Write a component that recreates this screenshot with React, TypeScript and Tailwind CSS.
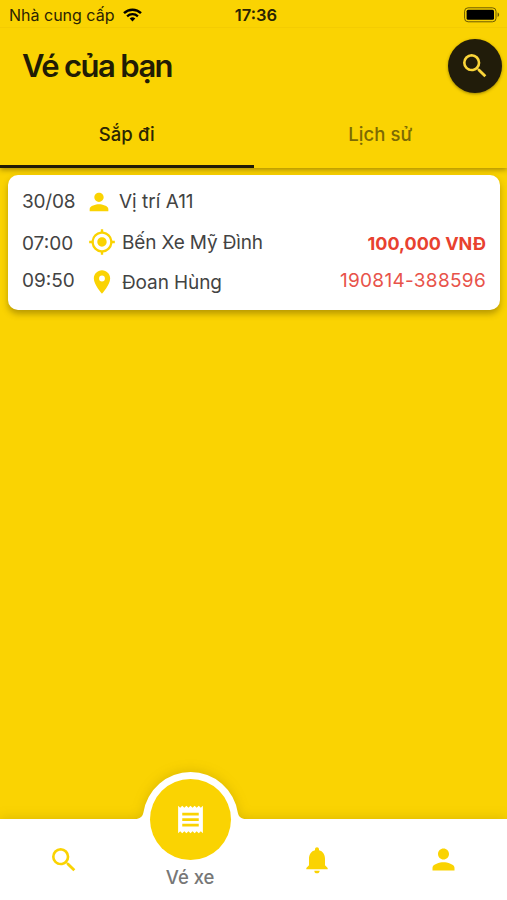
import React, { useState } from 'react';
import {
  MdLocationOn,
  MdMyLocation,
  MdNotifications,
  MdPerson,
  MdReceipt,
  MdSearch,
} from 'react-icons/md';

interface Ticket {
  date: string;
  seat: string;
  departTime: string;
  from: string;
  arriveTime: string;
  to: string;
  price: string;
  code: string;
}

const tickets: Ticket[] = [
  {
    date: '30/08',
    seat: 'Vị trí A11',
    departTime: '07:00',
    from: 'Bến Xe Mỹ Đình',
    arriveTime: '09:50',
    to: 'Đoan Hùng',
    price: '100,000 VNĐ',
    code: '190814-388596',
  },
];

function StatusBar() {
  return (
    <div className="grid grid-cols-3 items-center h-7 pl-[9px] pr-[7px] pt-[2px] border-b border-[#f4cc02] text-[#2b2403]">
      <div className="flex items-center gap-[9px]">
        <span className="text-[16px] leading-none whitespace-nowrap">Nhà cung cấp</span>
        <svg width="19" height="14" viewBox="0 0 19 14" fill="none" className="shrink-0 text-black">
          <path d="M1 5.2a12.2 12.2 0 0 1 17 0" stroke="currentColor" strokeWidth="2.4" />
          <path d="M4.1 8.3a7.8 7.8 0 0 1 10.8 0" stroke="currentColor" strokeWidth="2.3" />
          <path d="M9.5 13.4 6.7 10.6a4 4 0 0 1 5.6 0z" fill="currentColor" />
        </svg>
      </div>
      <span className="pl-[3px] pt-px text-center text-[16.5px] leading-none font-semibold">17:36</span>
      <div className="flex justify-end">
        <svg width="36" height="16" viewBox="0 0 36 16" fill="none">
          <rect x="0.6" y="0.8" width="31.4" height="14" rx="3.5" stroke="#6b5a02" strokeWidth="1" />
          <rect x="2.6" y="2.8" width="27.4" height="10" rx="1.5" fill="#000" />
          <path d="M33.6 5.6c2 .7 2 3.7 0 4.4z" fill="#6b5a02" />
        </svg>
      </div>
    </div>
  );
}

interface TabsProps {
  active: string;
  onChange: (tab: string) => void;
}

function Tabs({ active, onChange }: TabsProps) {
  const tabs = [
    { id: 'upcoming', label: 'Sắp đi' },
    { id: 'history', label: 'Lịch sử' },
  ];

  return (
    <div className="grid grid-cols-2 h-16">
      {tabs.map((tab) => (
        <button
          key={tab.id}
          onClick={() => onChange(tab.id)}
          className={`border-b-[3px] text-[18.5px] font-medium tracking-[0.1px] ${
            active === tab.id ? 'border-[#1f1b05] text-[#2b2503]' : 'border-transparent text-[#7d6a03]'
          }`}
        >
          {tab.label}
        </button>
      ))}
    </div>
  );
}

function TicketCard({ ticket }: { ticket: Ticket }) {
  return (
    <div className="h-[135px] rounded-[10px] bg-white px-[14px] pt-[7px] text-[19px] text-[#434343] shadow-[0_4px_6px_rgba(80,60,0,0.38)]">
      <div className="flex items-center h-10">
        <span className="w-[63px] tracking-[-0.2px]">{ticket.date}</span>
        <MdPerson className="size-[28px] text-[#fad302]" />
        <span className="ml-[6px]">{ticket.seat}</span>
      </div>
      <div className="flex items-center h-10">
        <span className="w-[66px] pt-[4px]">{ticket.departTime}</span>
        <MdMyLocation className="size-[28px] text-[#fad302]" />
        <span className="ml-[6px] pt-[2px] tracking-[-0.15px]">{ticket.from}</span>
        <span className="ml-auto pt-[2px] text-[18px] font-bold text-[#e8412f]">{ticket.price}</span>
      </div>
      <div className="flex items-center h-10">
        <span className="w-[66px] pb-[2px]">{ticket.arriveTime}</span>
        <MdLocationOn className="size-[28px] text-[#fad302]" />
        <span className="ml-[6px] pt-[2px] tracking-[-0.1px]">{ticket.to}</span>
        <span className="ml-auto pb-[2px] tracking-[0.3px] text-[#e8534a]">{ticket.code}</span>
      </div>
    </div>
  );
}

function BottomNav() {
  return (
    <nav className="relative h-[81px] text-[#fad302]">
      {/* White bar with the raised bump */}
      <svg
        className="absolute left-0 -top-[49px] overflow-visible drop-shadow-[0_-1px_6px_rgba(90,70,0,0.18)]"
        width="507"
        height="130"
        viewBox="0 0 507 130"
      >
        <path
          d="M0 49H135C140 49 142.5 46.5 143.3 43A47.8 47.8 0 0 1 237.9 43C238.7 46.5 241 49 246 49H507V130H0Z"
          fill="#fff"
        />
      </svg>
      <div className="relative grid grid-cols-4 h-full">
        <button className="flex justify-center items-center pl-[2px]">
          <MdSearch className="size-8" />
        </button>
        <button className="flex flex-col items-center">
          <span className="-mt-[40px] flex size-[81px] shrink-0 items-center justify-center rounded-full bg-[#fad302] text-white">
            <MdReceipt className="size-[33px]" />
          </span>
          <span className="mt-[5px] text-[18.5px] leading-[24px] font-medium text-[#777]">Vé xe</span>
        </button>
        <button className="flex justify-center items-center">
          <MdNotifications className="size-8" />
        </button>
        <button className="flex justify-center items-center">
          <MdPerson className="size-[33px]" />
        </button>
      </div>
    </nav>
  );
}

export default function App() {
  const [activeTab, setActiveTab] = useState('upcoming');

  return (
    <div className="flex flex-col w-[507px] h-[900px] overflow-hidden bg-[#fad302] font-['Inter','Noto_Sans',sans-serif]">
      <header className="relative bg-[#fad302] shadow-[0_2px_5px_rgba(80,60,0,0.45)]">
        <StatusBar />
        <div className="flex items-center justify-between h-[76px] pl-[22px] pr-[5px]">
          <h1 className="pb-px text-[31px] leading-none font-semibold tracking-[-1.6px] text-[#211c04]">Vé của bạn</h1>
          <button className="flex size-[54px] items-center justify-center rounded-full bg-[#211c0a] text-[#fad53a] shadow-[0_1px_3px_rgba(60,50,0,0.5)]">
            <MdSearch className="size-8" />
          </button>
        </div>
        <Tabs active={activeTab} onChange={setActiveTab} />
      </header>

      <main className="flex-1 pl-[8px] pr-[7px] pt-[7px]">
        {activeTab === 'upcoming' && tickets.map((ticket) => <TicketCard key={ticket.code} ticket={ticket} />)}
      </main>

      <BottomNav />
    </div>
  );
}
